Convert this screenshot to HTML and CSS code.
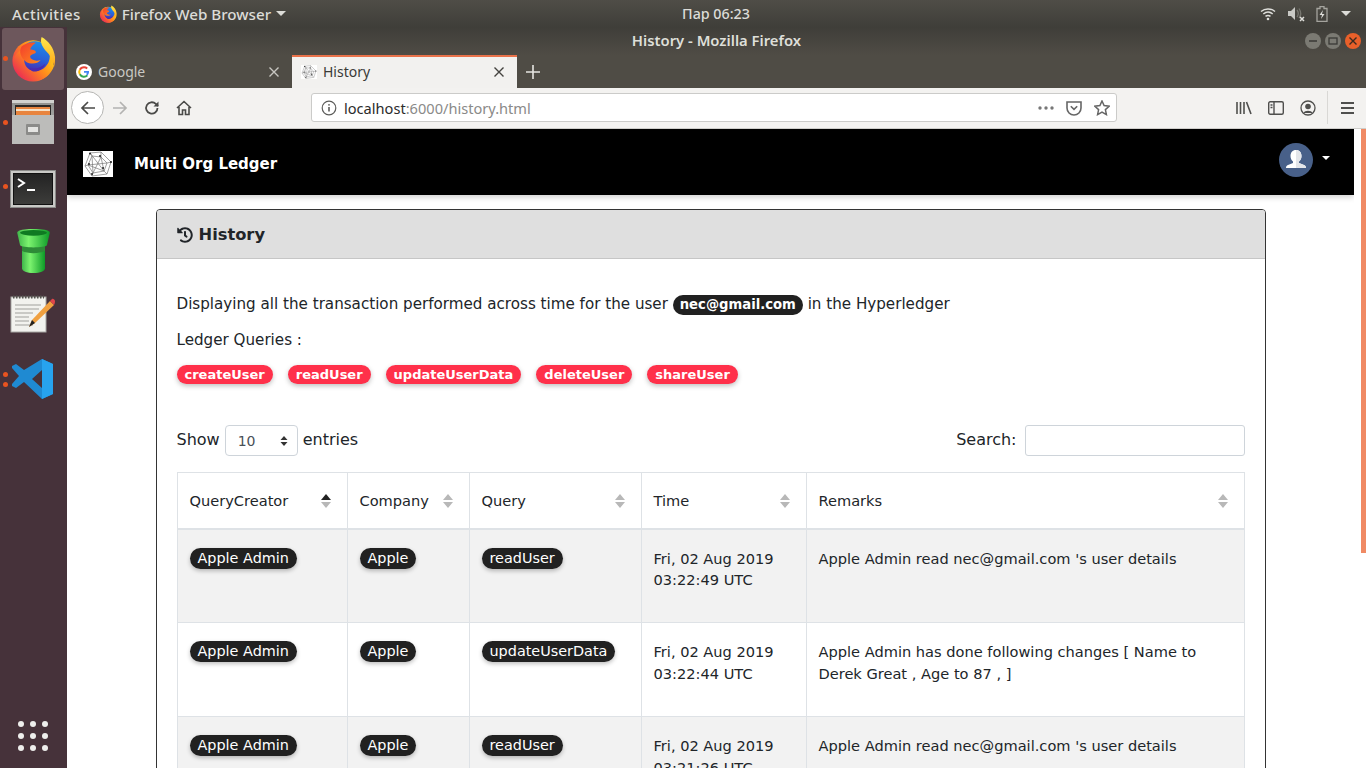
FILE: index.html
```html
<!DOCTYPE html>
<html>
<head>
    <meta charset="UTF-8">
    <title>History</title>
    <link rel="stylesheet" href="styles.css">
</head>
<body>
<svg class="defs" width="0" height="0">
    <defs>
        <linearGradient id="ffBody" x1="0.9" y1="0.2" x2="0.1" y2="0.8">
            <stop offset="0" stop-color="#ffcf1a"/>
            <stop offset="0.45" stop-color="#ff8a1c"/>
            <stop offset="1" stop-color="#ec2f52"/>
        </linearGradient>
        <linearGradient id="ffBlue" x1="0.6" y1="0" x2="0.4" y2="1">
            <stop offset="0" stop-color="#1a8dea"/>
            <stop offset="0.6" stop-color="#2a5fd8"/>
            <stop offset="1" stop-color="#4a2bb0"/>
        </linearGradient>
        <linearGradient id="ffFox" x1="0" y1="0" x2="1" y2="1">
            <stop offset="0" stop-color="#f23c2e"/>
            <stop offset="1" stop-color="#ff8a1c"/>
        </linearGradient>
        <linearGradient id="ffFlame" x1="0" y1="0" x2="0" y2="1">
            <stop offset="0" stop-color="#ffe94a"/>
            <stop offset="1" stop-color="#ffa51c"/>
        </linearGradient>
        <linearGradient id="pipe" x1="0" y1="0" x2="1" y2="0">
            <stop offset="0" stop-color="#3fb54a"/>
            <stop offset="0.35" stop-color="#7cf36f"/>
            <stop offset="1" stop-color="#0d9a27"/>
        </linearGradient>
        <linearGradient id="cabinet" x1="0" y1="0" x2="0" y2="1">
            <stop offset="0" stop-color="#8f8f8d"/>
            <stop offset="1" stop-color="#c4c4c2"/>
        </linearGradient>
        <linearGradient id="term" x1="0" y1="0" x2="0" y2="1">
            <stop offset="0" stop-color="#232323"/>
            <stop offset="1" stop-color="#3d3d3b"/>
        </linearGradient>
        <symbol id="firefox" viewBox="0 0 48 48">
            <circle cx="24" cy="26" r="21.500" fill="url(#ffBody)"/>
            <circle cx="26" cy="21" r="15.500" fill="url(#ffBlue)"/>
            <path d="M3 24c0 13 10 23 22 23 10 0 18-7 21-16-1-2-2-3-3-4-3 7-10 11-17 10-6-1-10-5-11-10-1-5 0-10 3-14-6 1-12 4-15 11z" fill="url(#ffBody)"/>
            <path d="M12 11c3-3 9-5 15-4-3 2-5 4-6 7 3 0 6 1 6 3-1 2-6 2-6 5 1 3 6 5 11 3-3 4-10 5-15 2-6-4-8-11-5-16z" fill="url(#ffFox)"/>
            <path d="M33 1c7 4 13 11 14 21 0 4 0 7-1 10-1-8-5-13-9-17-3-4-6-8-4-14z" fill="url(#ffFlame)"/>
            <path d="M20 33c5 2 12 1 17-4-2 5-8 9-13 8-2-1-3-2-4-4z" fill="#4a2bb0"/>
        </symbol>
        <symbol id="netlogo" viewBox="0 0 30 26">
            <rect width="30" height="26" fill="#fff"/>
            <g fill="none" stroke="#777" stroke-width=".7">
                <path d="M7 2l11-1 10 10-4 12-15 2-7-10z"/>
                <path d="M9 5l9 1 6 6-3 8-11 2-5-8zM7 2l2 3M18 1v5M28 11l-4 1M24 23l-3-3M9 25l1-3M2 15l3-1"/>
                <path d="M7 2l14 18M18 6l-8 16M5 14l19-2M9 5l1 17M18 6l3 14M5 14l16 6"/>
            </g>
            <g fill="#222"><circle cx="7" cy="2.500" r="1"/><circle cx="17" cy="5" r="1"/><circle cx="28" cy="11" r="1"/><circle cx="6" cy="13" r="1"/><circle cx="20" cy="17" r="1"/><circle cx="9" cy="23" r="1"/></g>
        </symbol>
    </defs>
</svg>

<div class="topbar">
    <div class="top-left">
        <span class="activities">Activities</span>
        <svg class="top-ff" width="18" height="18"><use href="#firefox"/></svg>
        <span class="app-name">Firefox Web Browser</span>
        <span class="caret-down"></span>
    </div>
    <div class="clock">Пар 06:23</div>
    <div class="tray">
        <svg width="16" height="14" viewBox="0 0 16 14" fill="none" stroke="#dfdfdb" stroke-width="1.5">
            <path d="M1 4.500c4-3.500 10-3.500 14 0"/><path d="M3.300 7c2.800-2.400 6.600-2.400 9.400 0"/><path d="M5.500 9.400c1.500-1.200 3.500-1.200 5 0"/><circle cx="8" cy="12" r="1.300" fill="#dfdfdb" stroke="none"/>
        </svg>
        <svg width="18" height="16" viewBox="0 0 18 16">
            <path d="M1 5h3l4-4v13l-4-4H1z" fill="#c9c9c5"/>
            <path d="M10 4c1.500 2 1.500 5 0 7M12 2.500c2 3 2 7 0 9.500" fill="none" stroke="#77766f" stroke-width="1.300"/>
            <path d="M13 11l4 4M17 11l-4 4" stroke="#dfdfdb" stroke-width="1.500"/>
        </svg>
        <svg width="12" height="16" viewBox="0 0 12 16">
            <path d="M4 .5h4v2h3v13H1v-13h3z" fill="none" stroke="#a5a49e" stroke-width="1.300"/>
            <path d="M7 4L3.500 9H6l-1 4 3.500-5H6z" fill="#dfdfdb"/>
        </svg>
        <span class="caret-down tray-caret"></span>
    </div>
</div>

<div class="desktop">
    <div class="dock">
        <div class="dock-item active">
            <span class="run-dot"></span>
            <svg width="46" height="46"><use href="#firefox"/></svg>
        </div>
        <div class="dock-item item-files">
            <span class="run-dot"></span>
            <svg width="42" height="44" viewBox="0 0 42 44">
                <rect x="0" y="0" width="42" height="44" rx="2" fill="url(#cabinet)"/>
                <rect x="0" y="0" width="42" height="3" fill="#d2d2d0"/>
                <rect x="3" y="5" width="36" height="11" fill="#2c2a28"/>
                <rect x="4" y="7" width="34" height="8" fill="#e8843e"/>
                <rect x="4" y="9" width="34" height="2" fill="#f6e2c8"/>
                <rect x="0" y="15" width="42" height="29" fill="#bcbcba"/>
                <rect x="14" y="24" width="14" height="11" rx="1" fill="#8b8b89"/>
                <rect x="16" y="27" width="10" height="5" fill="#e4e4e2"/>
            </svg>
        </div>
        <div class="dock-item item-term">
            <span class="run-dot"></span>
            <svg width="46" height="38" viewBox="0 0 46 38">
                <rect x=".5" y=".5" width="45" height="37" fill="#c9c9c6" stroke="#8a8a88"/>
                <rect x="3.500" y="3.500" width="39" height="31" fill="url(#term)" stroke="#111"/>
                <path d="M8 9l6 4-6 4" fill="none" stroke="#fff" stroke-width="2"/>
                <rect x="17" y="19" width="8" height="2" fill="#fff"/>
            </svg>
        </div>
        <div class="dock-item">
            <svg width="35" height="46" viewBox="0 0 36 48">
                <path d="M6 10h24v32c0 3-5 5-12 5S6 45 6 42z" fill="url(#pipe)"/>
                <path d="M6 15h24v9c-6 3-18 3-24 0z" fill="#2e8b37"/>
                <path d="M1 5c0-3 8-4 17-4s17 1 17 4l-3 13c-2 3-26 3-28 0z" fill="url(#pipe)"/>
                <ellipse cx="18" cy="5" rx="14" ry="3" fill="#0f7a22"/>
            </svg>
        </div>
        <div class="dock-item item-notes">
            <svg width="46" height="40" viewBox="0 0 46 40">
                <rect x="1" y="3" width="35" height="35" fill="#f2f2ee" stroke="#a8a8a4"/>
                <path d="M3 3h31" stroke="#55534f" stroke-width="3" stroke-dasharray="1.500 1.500"/>
                <path d="M5 11h26M5 15h24M5 19h18M5 23h14M5 27h14M5 31h18" stroke="#a0a09c" stroke-width="1"/>
                <path d="M19 33l3-7L40 7l4 4-19 18z" fill="#f0a040"/>
                <path d="M19 33l3-7 3 3z" fill="#222"/>
                <path d="M40 7l2-2c1-1 3 1 3 2s0 2-1 4z" fill="#e0454a"/>
            </svg>
        </div>
        <div class="dock-item">
            <span class="run-dot dot-a"></span>
            <span class="run-dot dot-b"></span>
            <svg width="42" height="42" viewBox="0 0 42 42">
                <path d="M30 1l11 5v30l-11 5-18-17-8 6-4-2v-2l7-8-7-8v-2l4-2 8 6zM30 12l-10 9 10 9z" fill="#1f8ad2" fill-rule="evenodd"/>
                <path d="M30 1l11 5v30l-11 5z" fill="#27a3ee"/>
            </svg>
        </div>
        <div class="apps-grid">
            <i></i><i></i><i></i><i></i><i></i><i></i><i></i><i></i><i></i>
        </div>
    </div>

    <div class="window">
        <div class="titlebar">
            <span class="title">History - Mozilla Firefox</span>
            <div class="win-btns">
                <span class="win-btn">
                    <svg width="10" height="10"><path d="M1 5h8" stroke="#3a3a36" stroke-width="1.500"/></svg>
                </span>
                <span class="win-btn">
                    <svg width="10" height="10"><rect x="1" y="2" width="8" height="6" fill="none" stroke="#3a3a36" stroke-width="1.300"/></svg>
                </span>
                <span class="win-btn close">
                    <svg width="10" height="10"><path d="M1.500 1.500l7 7M8.500 1.500l-7 7" stroke="#3a2a20" stroke-width="1.400"/></svg>
                </span>
            </div>
        </div>

        <div class="tabs">
            <div class="tab">
                <svg width="16" height="16" viewBox="0 0 16 16">
                    <circle cx="8" cy="8" r="8" fill="#fff"/>
                    <path d="M8 3.200a4.800 4.800 0 0 1 3.200 1.200" fill="none" stroke="#ea4335" stroke-width="2"/>
                    <path d="M3.800 5.700A4.800 4.800 0 0 1 8 3.200" fill="none" stroke="#ea4335" stroke-width="2"/>
                    <path d="M3.800 10.300a4.800 4.800 0 0 1 0-4.600" fill="none" stroke="#fbbc05" stroke-width="2"/>
                    <path d="M11.400 11.400A4.800 4.800 0 0 1 3.800 10.300" fill="none" stroke="#34a853" stroke-width="2"/>
                    <path d="M8 7.100h5v1c0 1.300-.6 2.500-1.600 3.300L10 10c.5-.3.800-.7 1-1.200H8z" fill="#4285f4"/>
                </svg>
                <span class="tab-label">Google</span>
                <svg class="tab-x" width="12" height="12"><path d="M1.500 1.500l9 9M10.500 1.500l-9 9" stroke="#c8c7c2" stroke-width="1.400"/></svg>
            </div>
            <div class="tab current">
                <svg width="16" height="16"><use href="#netlogo"/></svg>
                <span class="tab-label">History</span>
                <svg class="tab-x" width="12" height="12"><path d="M1.500 1.500l9 9M10.500 1.500l-9 9" stroke="#44433f" stroke-width="1.400"/></svg>
            </div>
            <svg class="new-tab" width="14" height="14"><path d="M7 0v14M0 7h14" stroke="#e6e5e1" stroke-width="1.600"/></svg>
        </div>

        <div class="toolbar">
            <span class="back-btn">
                <svg width="16" height="16" viewBox="0 0 16 16" fill="none" stroke="#4a4a48" stroke-width="1.700"><path d="M15 8H2M8 2L2 8l6 6"/></svg>
            </span>
            <svg class="tool" width="16" height="16" viewBox="0 0 16 16" fill="none" stroke="#b3b3b1" stroke-width="1.700"><path d="M1 8h13M8 2l6 6-6 6"/></svg>
            <svg class="tool" width="16" height="16" viewBox="0 0 16 16" fill="none" stroke="#4a4a48" stroke-width="1.800"><path d="M13.500 8a5.700 5.700 0 1 1-1.700-4.100L14 6"/><path d="M14.500 1.500V6.500H9.500" fill="#4a4a48" stroke="none"/></svg>
            <svg class="tool" width="16" height="16" viewBox="0 0 16 16" fill="none" stroke="#4a4a48" stroke-width="1.600"><path d="M1 8l7-6.500L15 8M3 7v7.500h3.500V10h3v4.500H13V7"/></svg>
            <div class="urlbar">
                <svg width="16" height="16" viewBox="0 0 16 16" fill="none" stroke="#5c5c5a" stroke-width="1.200"><circle cx="8" cy="8" r="6.800"/><path d="M8 7v4.500" stroke-width="1.600"/><circle cx="8" cy="4.800" r=".9" fill="#5c5c5a" stroke="none"/></svg>
                <span class="url"><b>localhost</b>:6000/history.html</span>
                <div class="url-actions">
                    <svg width="16" height="4"><circle cx="2" cy="2" r="1.700" fill="#777"/><circle cx="8" cy="2" r="1.700" fill="#777"/><circle cx="14" cy="2" r="1.700" fill="#777"/></svg>
                    <svg width="16" height="16" viewBox="0 0 16 16" fill="none" stroke="#666" stroke-width="1.600"><path d="M1 2h14v6a7 7 0 0 1-14 0z"/><path d="M4.800 6.200L8 9.400l3.200-3.200"/></svg>
                    <svg width="16" height="16" viewBox="0 0 16 16" fill="none" stroke="#666" stroke-width="1.500"><path d="M8 1l2.100 4.600 5 .6-3.700 3.400 1 5L8 12.100l-4.400 2.500 1-5L.9 6.200l5-.6z"/></svg>
                </div>
            </div>
            <div class="tool-right">
                <svg width="16" height="14" viewBox="0 0 16 14" fill="none" stroke="#4f4f4d" stroke-width="1.600"><path d="M1 1v12M4.500 1v12M8 1v12M10.500 1l4.500 12"/></svg>
                <svg width="16" height="14" viewBox="0 0 16 14" fill="none" stroke="#4f4f4d" stroke-width="1.400"><rect x=".7" y=".7" width="14.600" height="12.600" rx="1.500"/><path d="M6 1v12M2.500 4h2M2.500 6.500h2"/></svg>
                <svg width="16" height="16" viewBox="0 0 16 16" fill="none" stroke="#4f4f4d" stroke-width="1.300"><circle cx="8" cy="8" r="7"/><circle cx="8" cy="6.500" r="2.800" fill="#4f4f4d" stroke="none"/><path d="M3.500 13c1-3 8-3 9 0" fill="#4f4f4d" stroke="none"/></svg>
                <span class="tool-sep"></span>
                <svg width="13" height="12" viewBox="0 0 13 12" stroke="#4f4f4d" stroke-width="1.800"><path d="M0 1h13M0 6h13M0 11h13"/></svg>
            </div>
        </div>

        <div class="viewport">
            <div class="page">
                <nav class="navbar">
                    <svg class="brand-logo" width="30" height="26"><use href="#netlogo"/></svg>
                    <span class="brand">Multi Org Ledger</span>
                    <div class="nav-user">
                        <svg width="34" height="34" viewBox="0 0 34 34">
                            <circle cx="17" cy="17" r="17" fill="#486089"/>
                            <path d="M17 7c3.600 0 5.500 2.600 5.500 6 0 2.400-1 4.400-2.500 5.500v1.500l5 2c1.500.8 2 1.500 2 3H7c0-1.500.5-2.200 2-3l5-2v-1.500c-1.500-1.100-2.500-3.100-2.500-5.500 0-3.400 1.900-6 5.500-6z" fill="#fff"/>
                            <path d="M17 7c3.600 0 5.500 2.600 5.500 6 0 2.400-1 4.400-2.500 5.500v1.500l5 2c1.500.8 2 1.500 2 3H17z" fill="#e4e6ea"/>
                        </svg>
                        <span class="nav-caret"></span>
                    </div>
                </nav>

                <div class="container">
                    <div class="card">
                        <div class="card-header">
                            <svg width="16" height="16" viewBox="0 0 512 512"><path fill="#212529" d="M504 255.531c.253 136.64-111.18 248.372-247.82 248.468-59.015.042-113.223-20.53-155.822-54.911-11.077-8.94-11.905-25.541-1.839-35.607l11.267-11.267c8.609-8.609 22.353-9.551 31.891-1.984C173.062 425.135 212.781 440 256 440c101.705 0 184-82.311 184-184 0-101.705-82.311-184-184-184-48.814 0-93.149 18.969-126.068 49.932l50.754 50.754c10.08 10.08 2.941 27.314-11.313 27.314H24c-8.837 0-16-7.163-16-16V38.627c0-14.254 17.234-21.393 27.314-11.314l49.372 49.372C129.209 34.136 189.552 8 256 8c136.81 0 247.747 110.78 248 247.531zm-180.912 78.784l9.823-12.63c8.138-10.463 6.253-25.542-4.21-33.679L288 256.349V152c0-13.255-10.745-24-24-24h-16c-13.255 0-24 10.745-24 24v135.651l65.409 50.874c10.463 8.137 25.541 6.253 33.679-4.21z"/></svg>
                            <span>History</span>
                        </div>
                        <div class="card-body">
                            <p class="line">Displaying all the transaction performed across time for the user <span class="badge dark">nec@gmail.com</span> in the Hyperledger</p>
                            <p class="line queries-label">Ledger Queries :</p>
                            <div class="queries">
                                <span class="badge red">createUser</span>
                                <span class="badge red">readUser</span>
                                <span class="badge red">updateUserData</span>
                                <span class="badge red">deleteUser</span>
                                <span class="badge red">shareUser</span>
                            </div>
                            <div class="dt-controls">
                                <div class="dt-length">
                                    Show
                                    <span class="select">10
                                        <svg width="8" height="12" viewBox="0 0 8 12"><path d="M4 1l3.500 4h-7zM4 11L.5 7h7z" fill="#333"/></svg>
                                    </span>
                                    entries
                                </div>
                                <div class="dt-search">Search: <span class="search-input"></span></div>
                            </div>
                            <table class="dt">
                                <thead>
                                    <tr>
                                        <th class="c1">QueryCreator <svg class="sort" width="10" height="14" viewBox="0 0 10 14"><path d="M5 0l5 6H0z" fill="#222"/><path d="M5 14L0 8h10z" fill="#b8b8b8"/></svg></th>
                                        <th class="c2">Company <svg class="sort" width="10" height="14" viewBox="0 0 10 14"><path d="M5 0l5 6H0zM5 14L0 8h10z" fill="#b8b8b8"/></svg></th>
                                        <th class="c3">Query <svg class="sort" width="10" height="14" viewBox="0 0 10 14"><path d="M5 0l5 6H0zM5 14L0 8h10z" fill="#b8b8b8"/></svg></th>
                                        <th class="c4">Time <svg class="sort" width="10" height="14" viewBox="0 0 10 14"><path d="M5 0l5 6H0zM5 14L0 8h10z" fill="#b8b8b8"/></svg></th>
                                        <th class="c5">Remarks <svg class="sort" width="10" height="14" viewBox="0 0 10 14"><path d="M5 0l5 6H0zM5 14L0 8h10z" fill="#b8b8b8"/></svg></th>
                                    </tr>
                                </thead>
                                <tbody>
                                    <tr class="odd">
                                        <td><span class="pill">Apple Admin</span></td>
                                        <td><span class="pill">Apple</span></td>
                                        <td><span class="pill">readUser</span></td>
                                        <td class="txt">Fri, 02 Aug 2019 03:22:49 UTC</td>
                                        <td class="txt">Apple Admin read nec@gmail.com 's user details</td>
                                    </tr>
                                    <tr>
                                        <td><span class="pill">Apple Admin</span></td>
                                        <td><span class="pill">Apple</span></td>
                                        <td><span class="pill">updateUserData</span></td>
                                        <td class="txt">Fri, 02 Aug 2019 03:22:44 UTC</td>
                                        <td class="txt">Apple Admin has done following changes [ Name to Derek Great , Age to 87 , ]</td>
                                    </tr>
                                    <tr class="odd">
                                        <td><span class="pill">Apple Admin</span></td>
                                        <td><span class="pill">Apple</span></td>
                                        <td><span class="pill">readUser</span></td>
                                        <td class="txt">Fri, 02 Aug 2019 03:21:26 UTC</td>
                                        <td class="txt">Apple Admin read nec@gmail.com 's user details</td>
                                    </tr>
                                </tbody>
                            </table>
                        </div>
                    </div>
                </div>
            </div>
            <div class="scrollbar"><div class="thumb"></div></div>
        </div>
    </div>
</div>
</body>
</html>
```

FILE: styles.css
```css
* {
    margin: 0;
    padding: 0;
    box-sizing: border-box;
}

html, body {
    width: 1366px;
    height: 768px;
    overflow: hidden;
}
body {
    display: flex;
    flex-direction: column;
    font-family: "DejaVu Sans", sans-serif;
    color: #212529;
    background: #fff;
}
.defs {
    position: absolute;
}

/* gnome top bar */
.topbar {
    display: flex;
    align-items: center;
    justify-content: space-between;
    flex: 0 0 27px;
    padding: 0 15px 0 12px;
    background: linear-gradient(#4f4d47, #3f3e39);
    font-family: "Noto Sans", sans-serif;
    font-size: 15px;
    font-weight: 500;
    color: #dcdcd8;
}
.activities {
    letter-spacing: .4px;
}
.app-name {
    font-size: 15.200px;
}
.top-left {
    display: flex;
    align-items: center;
    width: 420px;
}
.top-ff {
    margin: 0 5px 0 18px;
}
.caret-down {
    width: 0;
    height: 0;
    margin-left: 5px;
    border-left: 5px solid transparent;
    border-right: 5px solid transparent;
    border-top: 5px solid #dcdcd8;
}
.clock {
    margin-left: 69px;
    font-size: 14.300px;
}
.tray {
    display: flex;
    align-items: center;
    justify-content: flex-end;
    gap: 11px;
    width: 420px;
}
.tray-caret {
    margin-left: 2px;
}

.desktop {
    display: flex;
    flex: 1;
    min-height: 0;
}

/* dock */
.dock {
    display: flex;
    flex-direction: column;
    flex: 0 0 67px;
    background: #46323a;
}
.dock-item {
    position: relative;
    display: flex;
    align-items: center;
    justify-content: center;
    height: 64px;
    padding-right: 1px;
}
.dock-item.active::before {
    content: "";
    position: absolute;
    left: 2px;
    right: 3px;
    top: 1px;
    bottom: 1px;
    border-radius: 3px;
    background: #6d575c;
}
.dock-item svg {
    position: relative;
}
.item-files svg {
    margin-top: -2px;
}
.item-term svg {
    margin-top: 3px;
}
.item-notes svg {
    margin-top: -3px;
}
.run-dot {
    position: absolute;
    left: 3px;
    top: 29px;
    width: 5px;
    height: 5px;
    border-radius: 50%;
    background: #e95420;
}
.dot-a {
    top: 25px;
}
.dot-b {
    top: 35px;
}
.apps-grid {
    display: grid;
    grid-template-columns: repeat(3, 6px);
    gap: 6px;
    margin: auto 0 17px 18px;
}
.apps-grid i {
    width: 6px;
    height: 6px;
    border-radius: 50%;
    background: #eeeeec;
}

/* firefox window */
.window {
    display: flex;
    flex-direction: column;
    flex: 1;
    min-width: 0;
}
.titlebar {
    display: flex;
    align-items: center;
    justify-content: center;
    position: relative;
    flex: 0 0 28px;
    padding-bottom: 2px;
    background: linear-gradient(#3f3e39, #4f4c45);
    font-family: "Noto Sans", sans-serif;
    font-size: 14.800px;
    font-weight: 600;
    color: #dedfd9;
}
.win-btns {
    position: absolute;
    right: 5px;
    top: 6px;
    display: flex;
    gap: 4px;
}
.win-btn {
    display: flex;
    align-items: center;
    justify-content: center;
    width: 16px;
    height: 16px;
    border-radius: 50%;
    background: #7b7a73;
}
.win-btn.close {
    background: #e9602a;
}
.tabs {
    display: flex;
    align-items: center;
    flex: 0 0 33px;
    background: #4f4c45;
    font-family: "Noto Sans", sans-serif;
    font-size: 14px;
    color: #c9c8c3;
}
.tab {
    display: flex;
    align-items: center;
    gap: 6px;
    width: 224px;
    height: 33px;
    padding: 0 11px 0 9px;
}
.tab-label {
    flex: 1;
}
.tab.current {
    width: 225px;
    margin-left: 1px;
    padding: 0 12px 2px 9px;
    background: #f2f1ef;
    border-top: 2px solid #e9724a;
    color: #3a3a38;
}
.new-tab {
    margin-left: 9px;
}
.toolbar {
    display: flex;
    align-items: center;
    flex: 0 0 41px;
    padding: 0 12px 1px 4px;
    background: #f3f2f0;
    border-bottom: 1px solid #cfcecb;
}
.back-btn {
    display: flex;
    align-items: center;
    justify-content: center;
    width: 33px;
    height: 33px;
    border: 1px solid #b5b5b3;
    border-radius: 50%;
    background: #fff;
}
.tool {
    margin-left: 16px;
}
.back-btn + .tool {
    margin-left: 8px;
}
.urlbar {
    display: flex;
    align-items: center;
    gap: 7px;
    width: 806px;
    height: 29px;
    margin-left: 119px;
    padding: 0 6px 0 9px;
    border: 1px solid #cbcbc9;
    border-radius: 3px;
    background: #fff;
    font-family: "Noto Sans", sans-serif;
    font-size: 14.600px;
    color: #8a8a88;
}
.url {
    flex: 1;
}
.url b {
    font-weight: 400;
    color: #2b2b2b;
}
.url-actions {
    display: flex;
    align-items: center;
    gap: 12px;
}
.tool-right {
    display: flex;
    align-items: center;
    gap: 16px;
    margin-left: auto;
}
.tool-sep {
    width: 1px;
    height: 33px;
    margin: 0 -3px 0 -5px;
    background: #d9d8d5;
}

/* page */
.viewport {
    display: flex;
    flex: 1;
    min-height: 0;
    overflow: hidden;
}
.page {
    flex: 1;
    min-width: 0;
}
.scrollbar {
    flex: 0 0 12px;
    display: flex;
    justify-content: flex-end;
    background: #fff;
}
.thumb {
    width: 5px;
    height: 424px;
    background: #f08a64;
}
.navbar {
    display: flex;
    align-items: center;
    height: 66px;
    padding: 0 24px 0 16px;
    background: #000;
    box-shadow: 0 2px 6px rgba(0,0,0,.2);
}
.brand-logo {
    margin-top: 4px;
}
.brand {
    margin: 4px 0 0 21px;
    font-size: 15px;
    font-weight: 700;
    color: #fff;
}
.nav-user {
    display: flex;
    align-items: center;
    margin: -4px 0 0 auto;
}
.nav-caret {
    width: 0;
    height: 0;
    margin: 0 0 4px 9px;
    border-left: 4px solid transparent;
    border-right: 4px solid transparent;
    border-top: 4px solid #fff;
}
.container {
    width: 1110px;
    margin: 14px auto 0;
}
.card {
    border: 1px solid #343434;
    border-radius: 4px;
    background: #fff;
}
.card-header {
    display: flex;
    align-items: center;
    gap: 6px;
    height: 49px;
    padding: 1px 20px 0;
    background: #dfdfdf;
    border-bottom: 1px solid #c6c6c6;
    border-radius: 3px 3px 0 0;
    font-size: 16.300px;
    font-weight: 700;
}
.card-body {
    padding: 33px 20px 0;
}
.line {
    font-size: 15.150px;
    line-height: 24px;
    white-space: nowrap;
}
.queries-label {
    margin-top: 12px;
}
.badge {
    display: inline-block;
    padding: 0 7px;
    border-radius: 10px;
    font-size: 13.200px;
    font-weight: 700;
    line-height: 19px;
    color: #fff;
    vertical-align: baseline;
}
.badge.dark {
    background: #212121;
    line-height: 20px;
}
.badge.red {
    padding: 0 8px;
    background: #ff304a;
    box-shadow: 0 2px 5px rgba(0,0,0,.25);
    font-size: 13px;
}
.queries {
    display: flex;
    gap: 15px;
    margin-top: 13px;
}
.dt-controls {
    display: flex;
    align-items: center;
    justify-content: space-between;
    margin-top: 39px;
    font-size: 16px;
}
.dt-length, .dt-search {
    display: flex;
    align-items: center;
    gap: 5px;
}
.dt-search {
    gap: 8px;
}
.select {
    display: flex;
    align-items: center;
    justify-content: space-between;
    width: 73px;
    height: 31px;
    margin-top: 2px;
    padding: 0 9px 0 12px;
    border: 1px solid #ced4da;
    border-radius: 4px;
    font-size: 14px;
    color: #495057;
}
.search-input {
    width: 220px;
    height: 31px;
    margin-top: 2px;
    border: 1px solid #ced4da;
    border-radius: 3px;
}
.dt {
    width: 1068px;
    margin-top: 16px;
    border-collapse: collapse;
    table-layout: fixed;
    font-size: 14.600px;
}
.dt th, .dt td {
    border: 1px solid #dee2e6;
    padding: 17px 12px 12px;
    text-align: left;
    vertical-align: top;
    font-weight: 400;
    line-height: 21.600px;
}
.dt th {
    position: relative;
    height: 56px;
    padding: 1px 12px 0;
    vertical-align: middle;
    border-bottom-width: 2px;
}
.c1 { width: 170px; }
.c2 { width: 122px; }
.c3 { width: 172px; }
.c4 { width: 165px; }
.sort {
    position: absolute;
    right: 16px;
    top: 21px;
}
.dt td {
    height: 94px;
}
.dt td.txt {
    padding-top: 18px;
}
.dt .odd td {
    background: #f2f2f2;
}
.pill {
    display: inline-block;
    padding: 0 8px;
    border-radius: 11px;
    background: #212121;
    box-shadow: 0 2px 4px rgba(0,0,0,.25);
    font-size: 14.400px;
    line-height: 21px;
    color: #fff;
}
```
